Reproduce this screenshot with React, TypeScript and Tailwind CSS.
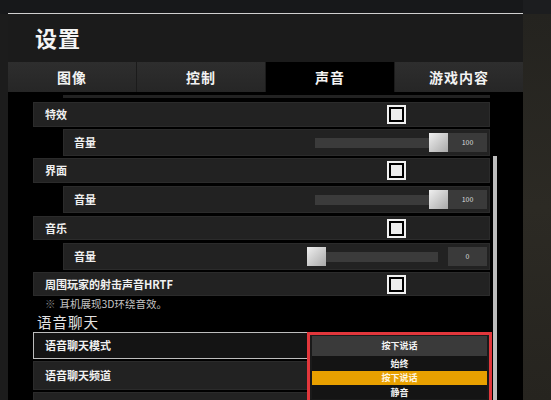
import React from 'react';

// 设置 → 声音 页面
const FONT = { fontFamily: '"Noto Sans CJK SC", "Noto Sans", sans-serif' };

function Checkbox() {
  return (
    <div className="w-[19px] h-[19px] shrink-0 border-2 border-[#f2f2f2] bg-black p-[2px]">
      <div className="w-full h-full bg-[#ededed]" />
    </div>
  );
}

function Slider({ value }: { value: number }) {
  const left = (value / 100) * 122;
  return (
    <div className="flex items-center">
      <div className="relative w-[141px] h-[19px]">
        <div className="absolute left-[8px] right-[10px] top-[5px] h-[10px] bg-[#3b3b3b]" />
        <div
          className="absolute top-0 w-[19px] h-[19px] bg-gradient-to-br from-[#f0f0f0] to-[#a9a9a9]"
          style={{ left }}
        />
      </div>
      <div className="w-[39px] h-[19px] bg-[#3a3a3a] flex items-center justify-center text-[7px] text-[#dcdcdc]">
        {value}
      </div>
    </div>
  );
}

function MainRow({ label, className = '' }: { label: string; className?: string }) {
  return (
    <div className={`shrink-0 flex items-center bg-[#222222] border border-[#2b2b2b] pl-[11px] pr-[83px] ${className}`}>
      <span className="flex-1 text-[11px] font-bold text-[#f0f0f0]">{label}</span>
      <Checkbox />
    </div>
  );
}

function SubRow({ value, className = '' }: { value: number; className?: string }) {
  return (
    <div className={`ml-[30px] h-[27px] shrink-0 flex items-center bg-[#222222] border border-[#2b2b2b] pl-[10px] pr-[2px] ${className}`}>
      <span className="flex-1 text-[11px] font-bold text-[#f0f0f0]">音量</span>
      <Slider value={value} />
    </div>
  );
}

export default function App() {
  const tabs = ['图像', '控制', '声音', '游戏内容'];
  return (
    <div className="w-[551px] h-[400px] overflow-hidden flex bg-[#1a1a1a]" style={FONT}>
      <div className="w-[8px] shrink-0 flex flex-col">
        <div className="h-[14px] shrink-0 bg-[#17181a]" />
        <div className="flex-1 bg-[#1c1c1c]" />
      </div>

      <div className="w-[515px] shrink-0 h-[400px] flex flex-col">
        <div className="h-[13px] shrink-0 bg-[#17181a]" />
        <div className="h-[1px] shrink-0 bg-[#d0d0d0]" />

        <div className="h-[48px] shrink-0 bg-[#1b1b1b] flex items-center pl-[27px] pb-[2px]">
          <span className="text-[22px] font-bold text-[#f4f4f4] tracking-[1px]">设置</span>
        </div>

        <div className="h-[30px] shrink-0 grid grid-cols-4 gap-[1px] bg-[#1b1b1b]">
          {tabs.map((t) => (
            <div
              key={t}
              className={`flex items-center justify-center text-[14px] font-bold text-[#f2f2f2] tracking-[1px] ${
                t === '声音' ? 'bg-black' : 'bg-gradient-to-b from-[#2e2e2e] to-[#262626]'
              }`}
            >
              {t}
            </div>
          ))}
        </div>

        <div className="flex-1 min-h-0 overflow-hidden bg-black flex">
          <div className="ml-[25px] w-[457px] shrink-0 flex flex-col">
            <div className="ml-[30px] mt-[3px] h-[3px] shrink-0 bg-[#222222]" />
            <MainRow label="特效" className="mt-[4px] h-[25px]" />
            <SubRow value={100} className="mt-[2px]" />
            <MainRow label="界面" className="mt-[2px] h-[25px]" />
            <SubRow value={100} className="mt-[3px]" />
            <MainRow label="音乐" className="mt-[3px] h-[24px]" />
            <SubRow value={0} className="mt-[3px]" />
            <MainRow label="周围玩家的射击声音HRTF" className="mt-[2px] h-[24px]" />

            <div className="h-[16px] shrink-0 flex items-center pl-[12px] text-[10.5px] text-[#c4c4c4]">
              <span className="text-[#8a8a8a] mr-[4px]">※</span>耳机展现3D环绕音效。
            </div>
            <div className="h-[20px] shrink-0 flex items-center pl-[4px] text-[14.5px] text-[#e2e2e2] tracking-[1px]">
              语音聊天
            </div>

            <div className="relative h-[27px] shrink-0 flex items-center bg-[#141414] border border-[#bdbdbd] pl-[11px]">
              <span className="text-[11px] font-bold text-[#f0f0f0]">语音聊天模式</span>
              <div className="absolute left-[273px] top-[-1px] w-[185px] border-[3px] border-[#e2373c] bg-[#1a1a1a] p-[2px] pt-[1px] pb-[4px]">
                <div className="h-[20px] bg-[#3a3a3a] flex items-center justify-center text-[9px] font-bold text-[#f2f2f2]">
                  按下说话
                </div>
                <div className="h-[15px] bg-[#141414] flex items-center justify-center text-[9px] font-bold text-[#f2f2f2]">
                  始终
                </div>
                <div className="h-[14px] bg-[#e8a000] flex items-center justify-center text-[9px] font-bold text-[#fff6e0]">
                  按下说话
                </div>
                <div className="h-[14px] bg-[#141414] flex items-center justify-center text-[9px] leading-none font-bold text-[#f2f2f2]">
                  静音
                </div>
              </div>
            </div>
            <div className="mt-[2px] h-[29px] shrink-0 flex items-center bg-[#222222] border border-[#2b2b2b] pl-[11px]">
              <span className="text-[11px] font-bold text-[#f0f0f0]">语音聊天频道</span>
            </div>
            <div className="mt-[2px] h-[28px] shrink-0 bg-[#222222] border border-[#2b2b2b]" />
          </div>

          <div className="ml-[3px] w-[4px] pt-[64px] flex flex-col">
            <div className="flex-1 bg-[#bdbdbd]" />
          </div>
        </div>
      </div>

      <div className="flex-1 flex flex-col">
        <div className="h-[14px] shrink-0 bg-[#1c1d1f]" />
        <div className="flex-1 bg-gradient-to-b from-[#24231f] via-[#2c2a24] to-[#26241f]" />
      </div>
    </div>
  );
}
